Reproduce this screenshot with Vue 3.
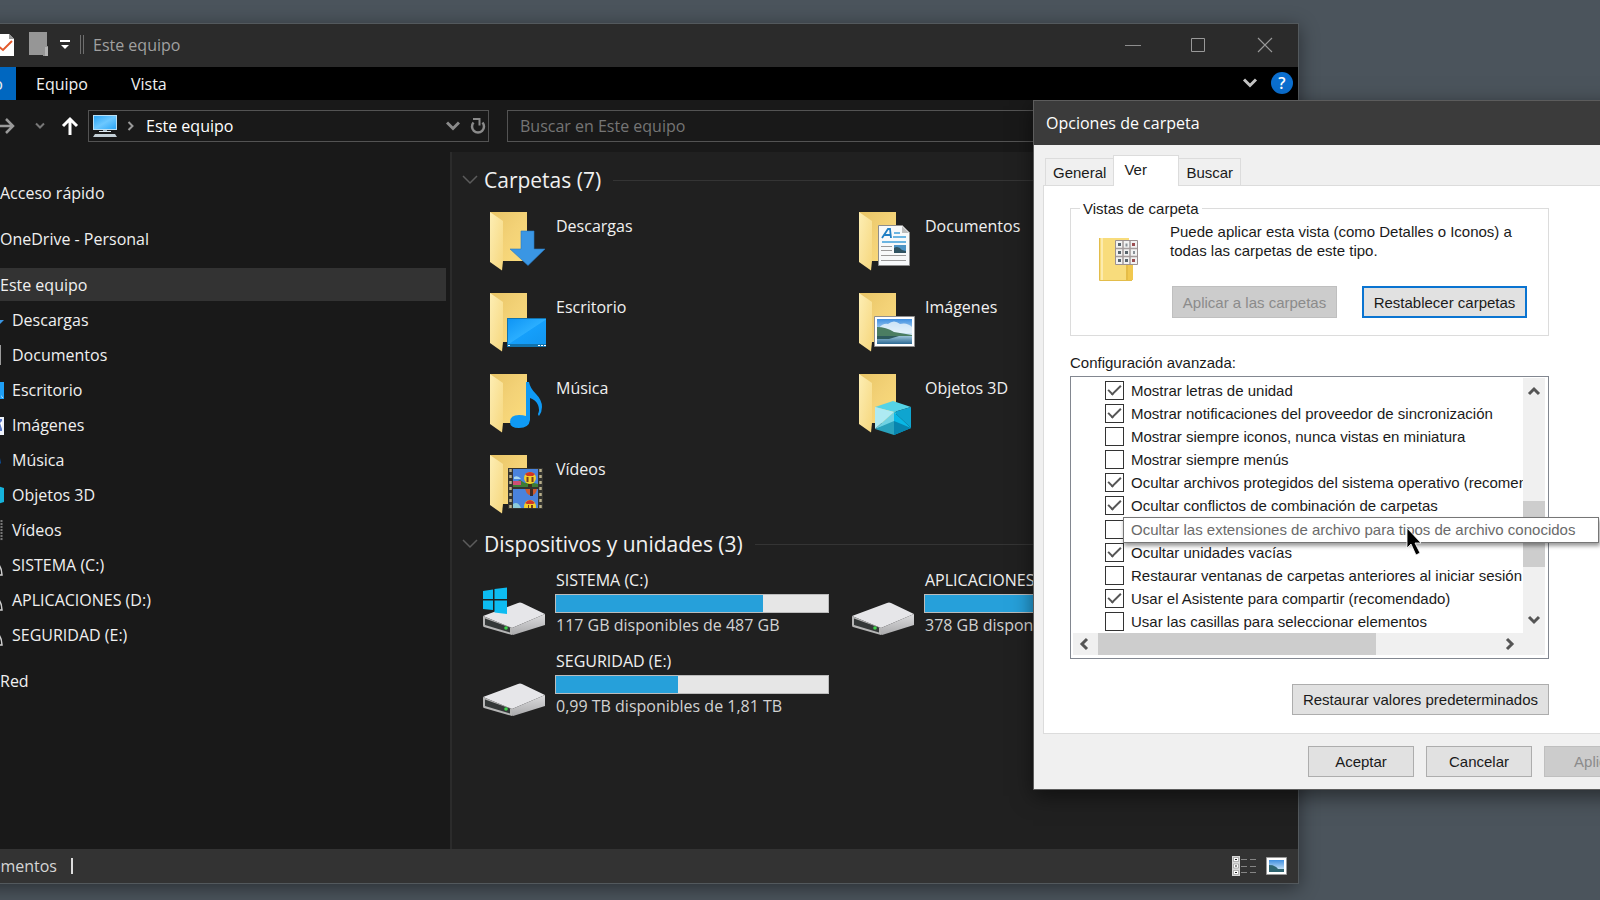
<script setup>
import { ref } from 'vue'

const sideTop = [
  { label: 'Acceso rápido' },
  { label: 'OneDrive - Personal' },
  { label: 'Este equipo', selected: true }
]
const sideChildren = [
  { label: 'Descargas', icon: 'down' },
  { label: 'Documentos', icon: 'doc' },
  { label: 'Escritorio', icon: 'desk' },
  { label: 'Imágenes', icon: 'img' },
  { label: 'Música', icon: 'music' },
  { label: 'Objetos 3D', icon: 'cube' },
  { label: 'Vídeos', icon: 'film' },
  { label: 'SISTEMA (C:)', icon: 'drive' },
  { label: 'APLICACIONES (D:)', icon: 'drive' },
  { label: 'SEGURIDAD (E:)', icon: 'drive' }
]
const folders = [
  { label: 'Descargas', icon: 'down' },
  { label: 'Documentos', icon: 'doc' },
  { label: 'Escritorio', icon: 'desk' },
  { label: 'Imágenes', icon: 'img' },
  { label: 'Música', icon: 'music' },
  { label: 'Objetos 3D', icon: 'cube' },
  { label: 'Vídeos', icon: 'film' }
]
const drives = [
  { label: 'SISTEMA (C:)', free: '117 GB disponibles de 487 GB', used: 76, system: true },
  { label: 'APLICACIONES (D:)', free: '378 GB disponibles de 931 GB', used: 59 },
  { label: 'SEGURIDAD (E:)', free: '0,99 TB disponibles de 1,81 TB', used: 45 }
]
const options = ref([
  { label: 'Mostrar letras de unidad', on: true },
  { label: 'Mostrar notificaciones del proveedor de sincronización', on: true },
  { label: 'Mostrar siempre iconos, nunca vistas en miniatura', on: false },
  { label: 'Mostrar siempre menús', on: false },
  { label: 'Ocultar archivos protegidos del sistema operativo (recomendado)', on: true },
  { label: 'Ocultar conflictos de combinación de carpetas', on: true },
  { label: 'Ocultar las extensiones de archivo para tipos de archivo conocidos', on: false, tip: true },
  { label: 'Ocultar unidades vacías', on: true },
  { label: 'Restaurar ventanas de carpetas anteriores al iniciar sesión', on: false },
  { label: 'Usar el Asistente para compartir (recomendado)', on: true },
  { label: 'Usar las casillas para seleccionar elementos', on: false }
])
const search = ref('')
</script>

<template>
  <div class="desktop">
    <svg class="defs" width="0" height="0" aria-hidden="true">
      <defs>
        <linearGradient id="gBack" x1="0" y1="0" x2="1" y2="1">
          <stop offset="0" stop-color="#e9c566" /><stop offset=".5" stop-color="#f3d277" /><stop offset="1" stop-color="#fbdc7c" />
        </linearGradient>
        <linearGradient id="gFlap" x1="0" y1="0" x2="1" y2="1">
          <stop offset="0" stop-color="#fdeeb4" /><stop offset="1" stop-color="#f6d77e" />
        </linearGradient>
        <linearGradient id="gDesk" x1="0" y1="0" x2="1" y2="1">
          <stop offset="0" stop-color="#0f95f5" /><stop offset=".5" stop-color="#2aaeff" /><stop offset=".52" stop-color="#159ffb" /><stop offset="1" stop-color="#1296f0" />
        </linearGradient>
        <linearGradient id="gSky" x1="0" y1="0" x2="0" y2="1">
          <stop offset="0" stop-color="#3f8fe0" /><stop offset="1" stop-color="#e4f3fb" />
        </linearGradient>
        <linearGradient id="gLake" x1="0" y1="0" x2="0" y2="1">
          <stop offset="0" stop-color="#9cc3d8" /><stop offset="1" stop-color="#2d6a94" />
        </linearGradient>
        <linearGradient id="gSide" x1="0" y1="0" x2="0" y2="1">
          <stop offset="0" stop-color="#dcdcde" /><stop offset="1" stop-color="#a9a9ab" />
        </linearGradient>
        <linearGradient id="gScreen" x1="0" y1="0" x2="1" y2="1">
          <stop offset="0" stop-color="#2aa4f4" /><stop offset=".5" stop-color="#6cc8ff" /><stop offset="1" stop-color="#2ba6f7" />
        </linearGradient>
      </defs>
    </svg>

    <section class="explorer" aria-label="Este equipo">
      <header class="titlebar">
        <svg class="props" width="20" height="24" viewBox="0 0 20 24">
          <path d="M0 1h15l5 5v17H0z" fill="#fff" /><path d="M15 1v5h5z" fill="#9a9a9a" />
          <path d="M3 12l6 5 9-9" fill="none" stroke="#e2592b" stroke-width="2" />
        </svg>
        <svg width="19" height="25" viewBox="0 0 19 25">
          <path d="M0 0h18v14h1v10h-5v-1H0z" fill="#969696" /><path d="M16 15h3v9h-3z" fill="#b4b4b4" />
        </svg>
        <svg class="qat" width="12" height="10" viewBox="0 0 12 10">
          <path d="M1 0h10v2H1zM2 5h8l-4 4z" fill="#fff" />
        </svg>
        <span class="tsep"></span>
        <h1>Este equipo</h1>
        <div class="winbtns">
          <button type="button" aria-label="Minimizar"><svg width="16" height="16"><path d="M0 8.500h16" stroke="#8e8e8e" /></svg></button>
          <button type="button" aria-label="Maximizar"><svg width="16" height="16"><path d="M.5 1.500h13v13h-13z" fill="none" stroke="#999" /></svg></button>
          <button type="button" aria-label="Cerrar"><svg width="16" height="16"><path d="M1 1l14 14M15 1L1 15" stroke="#999" stroke-width="1.200" /></svg></button>
        </div>
      </header>

      <nav class="ribbon">
        <button type="button" class="file">Archivo</button>
        <button type="button">Equipo</button>
        <button type="button">Vista</button>
        <span class="grow"></span>
        <button type="button" class="bare" aria-label="Expandir la cinta"><svg width="16" height="12"><path d="M2 2.500l6 6 6-6" fill="none" stroke="#c4c4c4" stroke-width="3" /></svg></button>
        <button type="button" class="help" aria-label="Ayuda">?</button>
      </nav>

      <div class="toolbar">
        <button type="button" class="bare fwd" aria-label="Adelante"><svg width="20" height="20"><path d="M2 10h16M11 3l7 7-7 7" fill="none" stroke="#9a9a9a" stroke-width="2.500" /></svg></button>
        <button type="button" class="bare recent" aria-label="Recientes"><svg width="10" height="8"><path d="M1 1.500l4 4 4-4" fill="none" stroke="#777" stroke-width="2" /></svg></button>
        <button type="button" class="bare up" aria-label="Subir"><svg width="18" height="20"><path d="M9 19V3M2 10l7-7 7 7" fill="none" stroke="#fff" stroke-width="3" /></svg></button>
        <div class="address">
          <svg width="24" height="24" viewBox="0 0 24 24">
            <path d="M0 1h24v15H0z" fill="#b9dff5" /><path d="M1 2h22v13H1z" fill="url(#gScreen)" />
            <path d="M10 16h4v2h-4z" fill="#9fb4c0" /><path d="M6 17h12v1H6z" fill="#dfe8ee" /><path d="M2 20h20l2 3H0z" fill="#c3cfd6" />
          </svg>
          <svg class="crumb" width="8" height="12"><path d="M1.500 2l4 4-4 4" fill="none" stroke="#999" stroke-width="2" /></svg>
          <span class="path">Este equipo</span>
          <button type="button" class="bare" aria-label="Historial"><svg width="14" height="10"><path d="M1 1.500l6 6 6-6" fill="none" stroke="#8a8a8a" stroke-width="3" /></svg></button>
          <button type="button" class="bare" aria-label="Actualizar"><svg width="16" height="18"><path d="M3.500 5.500a6 6 0 1 0 9 0" fill="none" stroke="#8a8a8a" stroke-width="2.500" /><path d="M3 2h6.500v6.500" fill="none" stroke="#8a8a8a" stroke-width="2" /></svg></button>
        </div>
        <input v-model="search" class="search" type="text" placeholder="Buscar en Este equipo" aria-label="Buscar en Este equipo">
      </div>

      <div class="body">
        <nav class="side">
          <a v-for="s in sideTop" :key="s.label" href="#" class="top" :class="{ selected: s.selected }">{{ s.label }}</a>
          <div class="children">
            <a v-for="s in sideChildren" :key="s.label" href="#">
              <svg width="24" height="24" viewBox="0 0 24 24">
                <path v-if="s.icon === 'down'" d="M8 2h8v10h8L12 24 0 12h8z" fill="#3a96e4" />
                <g v-else-if="s.icon === 'doc'"><path d="M3 2h18v20H3z" fill="#9b9b9b" /><path d="M4 3h16v18H4z" fill="#eee" /></g>
                <g v-else-if="s.icon === 'desk'"><path d="M0 4h24v17H0z" fill="#1e9ff5" /><path d="M21 17l1 3h1z" fill="#fff" /></g>
                <g v-else-if="s.icon === 'img'"><path d="M0 4h24v18H0z" fill="#eef2fa" /><path d="M2 6h20v12H2z" fill="#5878c8" /><path d="M20 10l2-2v8z" fill="#fff" /></g>
                <path v-else-if="s.icon === 'music'" d="M9 1h3q1 5 8 9l1 5-1 1q-3-5-8-6v8a5 4 0 1 1-3-4z" fill="#0c4f9a" />
                <path v-else-if="s.icon === 'cube'" d="M0 5l12-4 12 4v14l-12 4-12-4z" fill="#16b3dc" />
                <g v-else-if="s.icon === 'film'"><path d="M2 2h21v21H2z" fill="#1d1d1d" /><path d="M21.500 2v21" stroke="#777" stroke-width="2" stroke-dasharray="2 1" /></g>
                <path v-else d="M1 22l0-8 18-2q3 4 3 10z" fill="none" stroke="#cfcfcf" stroke-width="1.500" />
              </svg>
              <span>{{ s.label }}</span>
            </a>
          </div>
          <a href="#" class="top">Red</a>
        </nav>

        <main class="pane">
          <h2><svg width="16" height="10"><path d="M1 1l7 7 7-7" fill="none" stroke="#5c5c5c" stroke-width="1.500" /></svg><span>Carpetas (7)</span></h2>
          <div class="grid folders">
            <div v-for="f in folders" :key="f.label" class="tile">
              <svg width="64" height="64" viewBox="-8 0 64 64">
                <path d="M0 0h37v49H0z" fill="url(#gBack)" />
                <path d="M0 0l13 9v40l-1 9.500L0 50z" fill="url(#gFlap)" />
                <path v-if="f.icon === 'down'" d="M31 19h13v18h11L38 53.500 20 37h11z" fill="#3a96e4" stroke="#2a78c0" stroke-width=".6" />
                <g v-else-if="f.icon === 'doc'">
                  <path d="M19.500 13.500h24l7 7v33h-31z" fill="#f7f9fa" stroke="#8d8d8d" /><path d="M43 14v7h7z" fill="#bdbdbd" />
                  <path d="M23 26l6-9h2l1 9M25 23h7" fill="none" stroke="#1f7fc4" stroke-width="1.800" />
                  <path d="M35 21h6M34 25h13M23 30h24" stroke="#3e9fda" stroke-width="1.500" />
                  <path d="M22 34.500h11M22 38.500h11M22 43.500h25M22 48.500h25" stroke="#999" />
                  <path d="M35 33h12v8H35z" fill="#4d93c4" /><path d="M35 36q4-3 8 2l4 1v2H35z" fill="#2f5362" />
                </g>
                <g v-else-if="f.icon === 'desk'">
                  <path d="M17 25h40v29H17z" fill="#1273ad" /><path d="M18 26h38v25H18z" fill="url(#gDesk)" />
                  <path d="M18 52h2v1h-2zM48 52h2v1h-2zM51 52h2v1h-2zM54 52h2v1h-2z" fill="#fff" />
                </g>
                <g v-else-if="f.icon === 'img'">
                  <path d="M15.500 23.500h40v30h-40z" fill="#fff" stroke="#8f8f8f" /><path d="M18 26h35v17H18z" fill="url(#gSky)" />
                  <path d="M20 35q4-5 9-4 6-5 12 0 7-2 12 3v6H18z" fill="#eaf5fb" opacity=".8" />
                  <path d="M18 34q9 0 17 5l18 3v1H18z" fill="#4b7d62" /><path d="M18 43h35v8H18z" fill="url(#gLake)" /><path d="M18 43h22l-10 3H18z" fill="#2d5a5c" />
                </g>
                <path v-else-if="f.icon === 'music'" d="M36 8h3q1 6 7 12 6 6 6 13 0 5-3 9-1-1-1-2 2-4 0-9-2-5-8-7v22q-1 8-11 8-9 0-9-6 0-7 9-7 4 0 7 1z" fill="#0f9af5" />
                <g v-else-if="f.icon === 'cube'">
                  <path d="M34 27l18 6-17 5-19-5z" fill="#55d3e6" /><path d="M16 33l19 5-19 17z" fill="#aeeaf3" />
                  <path d="M16 55l19-17v11z" fill="#6fd2e3" /><path d="M35 38l17-5v21z" fill="#0fa5d0" /><path d="M35 38l17 16-17 7z" fill="#08b8e6" />
                  <path d="M16 55l19-8v14z" fill="#29a2bd" /><path d="M35 47l17 7-17 7z" fill="#0784ae" />
                </g>
                <g v-else>
                  <path d="M18 13h35v41H18z" fill="#33332f" /><path d="M23 14h25v18H23zM23 34h25v19H23z" fill="#4a83dc" />
                  <path d="M20.500 14v39M50.500 14v39" stroke="#b9b08c" stroke-width="2.500" stroke-dasharray="3 3" />
                  <path d="M23 28l7-3 5 3 5-1 8 2v3H23z" fill="#3e7c35" /><path d="M23 26h8v4h-8z" fill="#cc4f74" /><path d="M24 22q4-2 7 2h-7z" fill="#a8d8ee" />
                  <circle cx="40" cy="23" r="6" fill="#f2cf2c" /><path d="M35 19q5-4 10 0l-2 2h-6z" fill="#cf3526" /><path d="M36.500 22h2v5h-2zM41.500 22h2v5h-2z" fill="#7a3d1c" /><path d="M38 29h4v3h-4z" fill="#40331c" />
                  <path d="M35 34h12q-1 5-4 6h-4q-3-2-4-6z" fill="#cc5b2e" /><path d="M40 34h3v7h-3z" fill="#3d2a26" />
                  <path d="M34 53q0-8 6-8t6 8z" fill="#f2cf2c" /><path d="M35 48q5-6 10 0l-2 1h-6z" fill="#cf3526" /><path d="M38 50h1v3h-1zM41 50h2v3h-2z" fill="#7a3d1c" /><path d="M23 49q5-3 8 4h-8z" fill="#8ccbd9" />
                </g>
              </svg>
              <span>{{ f.label }}</span>
            </div>
          </div>

          <h2><svg width="16" height="10"><path d="M1 1l7 7 7-7" fill="none" stroke="#5c5c5c" stroke-width="1.500" /></svg><span>Dispositivos y unidades (3)</span></h2>
          <div class="grid drives">
            <div v-for="d in drives" :key="d.label" class="tile">
              <svg width="64" height="64" viewBox="0 0 64 64">
                <path d="M1 30l35-13q2-1 4 0l23 11-33 14z" fill="#e6e6e9" />
                <path d="M30 42l33-14v11L31 49q-1 0-1-1z" fill="url(#gSide)" />
                <path d="M1 30l29 12v7L2 41q-1 0-1-2z" fill="#b5b5b5" /><path d="M3 32.500l25 9v5L3 39z" fill="#343838" />
                <circle cx="24" cy="42" r="1.800" fill="#3fd14a" />
                <path v-if="d.system" d="M1 5l10-1.500V13H1zM12.500 3L25 1.500V13H12.500zM1 14.500h10V24L1 23zM12.500 14.500H25V28l-12.500-1.500z" fill="#0dbcf2" />
              </svg>
              <div class="info">
                <span class="name">{{ d.label }}</span>
                <div class="bar"><i :style="{ width: d.used + '%' }"></i></div>
                <span class="free">{{ d.free }}</span>
              </div>
            </div>
          </div>
        </main>
      </div>

      <footer class="status">
        <span class="count">10 elementos</span><span class="ssep"></span>
        <span class="grow"></span>
        <button type="button" class="bare" aria-label="Detalles">
          <svg width="26" height="20" viewBox="0 0 26 20">
            <path d="M0 0h8v20H0z" fill="#d9d9d9" /><path d="M1.500 1.500h5v4h-5zM1.500 8h5v4h-5zM1.500 14.500h5v4h-5z" fill="#fff" stroke="#888" stroke-width=".6" />
            <path d="M3 3h2v1H3zM3 9.500h2v1H3zM3 16h2v1H3z" fill="#222" />
            <path d="M9 3.500h6M18 3.500h6M9 10.500h6M18 10.500h6M9 16.500h6M18 16.500h6" stroke="#858585" />
          </svg>
        </button>
        <button type="button" class="bare" aria-label="Iconos grandes">
          <svg width="22" height="18" viewBox="0 0 22 18">
            <path d="M.5 .5h20v17H.5z" fill="#fff" stroke="#9a9a9a" /><path d="M3 3h15v12H3z" fill="url(#gSky)" /><path d="M3 8q6 0 9 4h6v3H3z" fill="#2f6571" />
          </svg>
        </button>
      </footer>
    </section>

    <section class="dialog" role="dialog" aria-label="Opciones de carpeta">
      <header>Opciones de carpeta</header>
      <div class="content">
        <div class="tabs" role="tablist">
          <button type="button" role="tab">General</button>
          <button type="button" role="tab" class="active" aria-selected="true">Ver</button>
          <button type="button" role="tab">Buscar</button>
        </div>
        <div class="sheet">
          <fieldset>
            <legend>Vistas de carpeta</legend>
            <svg width="40" height="44" viewBox="0 0 40 44">
              <path d="M0 1h30v42H0z" fill="#f8dc7c" /><path d="M.5 1v42.500H33" fill="none" stroke="#e3bd4b" /><path d="M3 1v42" stroke="#fcebae" stroke-width="2" />
              <path d="M27 26h7v17h-7z" fill="#f1c84f" /><path d="M28 26v17" stroke="#d9b040" />
              <path d="M16.500 3.500h22v24h-22z" fill="#f2f2f2" stroke="#9b9191" /><path d="M24 4v23M31 4v23M17 11.500h21M17 19.500h21" stroke="#a49c9c" stroke-width="1.500" />
              <path d="M19 6h3v3h-3zM19 14h3v3h-3zM19 22h3v3h-3zM26 14h3v3h-3zM26 22h3v3h-3z" fill="#59656d" /><path d="M26.500 6.500h2v3h-2zM34 14h2v3h-2z" fill="#8a9298" /><path d="M33 6h3v3h-3zM33 22h3v3h-3z" fill="#9b4d50" />
            </svg>
            <div class="views">
              <p>Puede aplicar esta vista (como Detalles o Iconos) a todas las carpetas de este tipo.</p>
              <div class="pair">
                <button type="button" class="btn" disabled>Aplicar a las carpetas</button>
                <button type="button" class="btn focus">Restablecer carpetas</button>
              </div>
            </div>
          </fieldset>

          <p id="adv" class="caption">Configuración avanzada:</p>
          <div class="listbox" role="group" aria-labelledby="adv">
            <ul>
              <li v-for="(o, i) in options" :key="o.label">
                <input :id="'opt' + i" v-model="o.on" type="checkbox">
                <label v-if="!o.tip" :for="'opt' + i">{{ o.label }}</label>
              </li>
            </ul>
            <div class="vbar">
              <button type="button" class="bare" aria-label="Arriba"><svg width="14" height="12"><path d="M2 9l5-5 5 5" fill="none" stroke="#555" stroke-width="3" /></svg></button>
              <i></i>
              <button type="button" class="bare" aria-label="Abajo"><svg width="14" height="12"><path d="M2 3l5 5 5-5" fill="none" stroke="#555" stroke-width="3" /></svg></button>
            </div>
            <div class="hbar">
              <button type="button" class="bare" aria-label="Izquierda"><svg width="12" height="14"><path d="M9 2L4 7l5 5" fill="none" stroke="#555" stroke-width="3" /></svg></button>
              <i></i>
              <button type="button" class="bare" aria-label="Derecha"><svg width="12" height="14"><path d="M3 2l5 5-5 5" fill="none" stroke="#555" stroke-width="3" /></svg></button>
            </div>
            <label class="tip" for="opt6">{{ options[6].label }}</label>
            <svg class="cursor" width="16" height="28" viewBox="-1 -1 16 28"><path d="M0 0v20l4-4 5 11 4-2-5-10h6z" fill="#000" stroke="#fff" stroke-width=".8" /></svg>
          </div>
          <button type="button" class="btn restore">Restaurar valores predeterminados</button>
        </div>
        <div class="actions">
          <button type="button" class="btn">Aceptar</button>
          <button type="button" class="btn">Cancelar</button>
          <button type="button" class="btn" disabled>Aplicar</button>
        </div>
      </div>
    </section>
  </div>
</template>

<style>
html, body { background: #4b545c; }
</style>

<style scoped>
.desktop { position: relative; min-height: 100vh; overflow: hidden; background: #4b545c; font: 16px/20px "Open Sans", "Noto Sans", sans-serif; }
.desktop *, .desktop *::after { box-sizing: border-box; }
.defs { position: absolute; }
svg { display: block; flex: none; }
button { font: inherit; color: inherit; margin: 0; }
a { color: inherit; text-decoration: none; }
.grow { flex: 1; }
.bare { border: 0; background: none; padding: 0; }

.explorer { position: absolute; left: -100px; right: 301px; top: 23px; bottom: 16px; display: flex; flex-direction: column; background: #191919; color: #f0f0f0; border: 1px solid #53595d; border-left: 0; box-shadow: 0 4px 18px rgba(0, 0, 0, .45); }
.titlebar { display: flex; align-items: center; height: 43px; padding: 0 0 2px 94px; background: #2b2b2b; }
.props { margin-right: 15px; }
.qat { margin: 0 9px 0 11px; }
.tsep { width: 4px; height: 19px; border: solid #6e6e6e; border-width: 0 1px; margin-right: 9px; }
h1 { margin: 0; font: inherit; color: #a0a0a0; flex: 1; }
.winbtns { display: flex; height: 100%; }
.winbtns button { width: 66px; border: 0; background: none; padding: 0; display: grid; place-items: center; }
.ribbon { display: flex; align-items: stretch; height: 33px; background: #000; }
.ribbon button { border: 0; background: none; padding: 0 22px 0 21px; }
.ribbon .file { width: 116px; padding: 0 13px 0 0; text-align: right; background: #0067c0; margin-right: -1px; }
.ribbon .bare { padding: 0 13px 2px 0; display: grid; place-items: center; }
.ribbon .help { width: 22px; height: 22px; align-self: center; margin: 0 5px 2px 0; padding: 0; border-radius: 50%; background: #0b6fd0; color: #fff; font-weight: 600; }
.toolbar { display: flex; align-items: center; height: 52px; padding: 0 10px 0 95px; }
.recent { margin-left: 20px; }
.up { margin: 0 9px 0 16px; }
.address { display: flex; align-items: center; width: 401px; height: 32px; margin-right: 18px; padding: 0 2px 0 4px; border: 1px solid #535353; }
.crumb { margin: 0 11px 0 10px; }
.path { flex: 1; color: #fff; }
.address button { margin-left: 10px; }
.search { flex: 1; min-width: 0; height: 32px; padding: 0 12px; border: 1px solid #535353; background: #191919; color: #fff; font: inherit; }
.search::placeholder { color: #757575; opacity: 1; }
.body { display: flex; flex: 1; min-height: 0; }
.side { width: 550px; padding: 24px 4px 0 0; display: flex; flex-direction: column; gap: 13px; }
.side a { display: flex; align-items: center; height: 33px; }
.side .top { padding-left: 100px; }
.side .selected { background: #333; margin-bottom: -11px; }
.children { display: flex; flex-direction: column; gap: 2px; }
.children a { padding-left: 80px; gap: 8px; }
.pane { flex: 1; min-width: 0; padding: 14px 10px 0; background: #202020; border-left: 2px solid #2b2b2b; }
h2 { display: flex; align-items: center; gap: 6px; height: 28px; margin: 0; font-size: 21px; line-height: 28px; font-weight: 400; }
h2::after { content: ""; flex: 1; height: 1px; margin-left: 6px; background: #343434; }
.grid { display: grid; grid-template-columns: repeat(auto-fill, 369px); grid-auto-rows: 81px; padding-left: 20px; }
.tile { display: flex; gap: 10px; }
.folders { padding-top: 6px; margin-bottom: 6px; }
.folders .tile { padding-top: 12px; }
.folders span { padding-top: 4px; }
.drives .tile { padding-top: 12px; }
.drives svg { margin-top: 16px; }
.info { display: flex; flex-direction: column; }
.bar { width: 274px; height: 19px; margin: 4px 0 2px -1px; border: 1px solid #bcbcbc; background: #e6e6e6; }
.bar i { display: block; height: 100%; background: #26a0da; }
.free { color: #d2d2d2; }
.status { display: flex; align-items: center; height: 34px; padding: 0 10px 0 0; background: #333; color: #d6d6d6; }
.count { width: 157px; text-align: right; white-space: nowrap; }
.ssep { width: 2px; height: 16px; margin-left: 14px; background: #ddd; }
.status button { margin-left: 8px; }

.dialog { position: absolute; left: 1033px; right: -60px; top: 100px; background: #f0f0f0; color: #1a1a1a; border: 1px solid #5c5c5c; box-shadow: 0 6px 20px rgba(0, 0, 0, .5); }
.dialog header { height: 44px; padding: 0 12px; line-height: 44px; background: #3b3b3b; color: #fff; }
.content { padding: 10px 9px 12px; font: 15px/19px "Liberation Sans", Arial, sans-serif; }
.tabs { display: flex; align-items: flex-end; height: 30px; padding-left: 2px; }
.tabs button { height: 27px; padding: 0 7px; border: 1px solid #dcdcdc; border-bottom: 0; background: #f0f0f0; }
.tabs .active { width: 66px; height: 31px; margin: 0 -1px -1px; padding: 0 10px 4px; text-align: left; background: #fff; position: relative; }
.sheet { padding: 13px 100px 18px 26px; background: #fff; border: 1px solid #dcdcdc; }
fieldset { display: flex; margin: 0; padding: 4px 21px 17px 28px; border: 1px solid #dcdcdc; min-width: 0; }
fieldset > svg { margin-top: 15px; }
legend { margin-left: -19px; padding: 0 3px; }
.views { flex: 1; margin-left: 31px; }
.views p { margin: 0; }
.pair { display: flex; justify-content: space-between; margin: 26px 0 0 2px; }
.btn { height: 31px; padding: 0; border: 1px solid #adadad; background: #e1e1e1; }
.btn:disabled { background: #cccccc; border-color: #bfbfbf; color: #8b8b8b; }
.pair .btn { width: 165px; height: 32px; }
.pair .focus { border: 2px solid #0a74d1; }
.caption { margin: 17px 0 4px; }
.listbox { position: relative; display: grid; grid-template-columns: 1fr 22px; grid-template-rows: 255px 22px; padding: 1px 3px 3px 2px; border: 1px solid #828790; }
ul { display: grid; grid-auto-rows: 1fr; margin: 0; padding: 1px 0 0 32px; overflow: hidden; list-style: none; }
li { display: flex; align-items: center; gap: 7px; min-width: 0; white-space: nowrap; }
input[type=checkbox] { appearance: none; position: relative; flex: none; width: 19px; height: 19px; margin: 0; border: 1px solid #333; background: #fff; }
input[type=checkbox]:checked::after { content: ""; position: absolute; left: 2px; top: 3px; width: 13px; height: 7px; border: solid #555; border-width: 0 0 2px 2px; transform: rotate(-45deg); }
.vbar { display: flex; flex-direction: column; align-items: center; padding: 7px 0; background: #f0f0f0; }
.vbar i { width: 22px; height: 66px; margin: 104px 0 auto; background: #cdcdcd; }
.hbar { grid-column: 1 / 3; display: flex; align-items: center; padding: 0 29px 0 5px; background: #f0f0f0; }
.hbar i { width: 278px; height: 22px; margin: 0 auto 0 8px; background: #cdcdcd; }
.tip { position: absolute; left: 52px; top: 140px; min-width: 476px; padding: 2px 9px 2px 7px; border: 1px solid #767676; background: #fff; color: #6a6a6a; line-height: 20px; white-space: nowrap; box-shadow: 1px 3px 4px rgba(0, 0, 0, .4); }
.cursor { position: absolute; left: 335px; top: 150px; }
.restore { display: block; width: 257px; margin: 25px 0 0 auto; }
.actions { display: flex; justify-content: flex-end; gap: 12px; margin-top: 12px; }
.actions .btn { width: 106px; }
</style>
